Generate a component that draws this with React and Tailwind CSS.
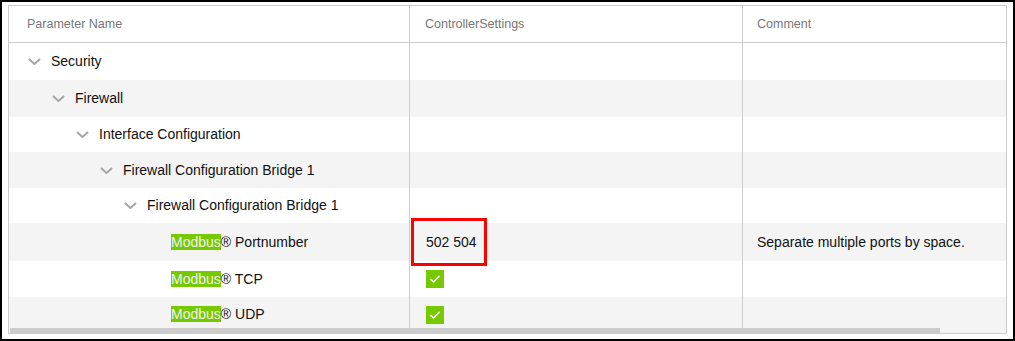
const rows = [
	{ label: 'Security', level: 0, h: 'h-[37px]' },
	{ label: 'Firewall', level: 1, h: 'h-[37px]' },
	{ label: 'Interface Configuration', level: 2, h: 'h-[35px]' },
	{ label: 'Firewall Configuration Bridge 1', level: 3, h: 'h-[36px]' },
	{ label: 'Firewall Configuration Bridge 1', level: 4, h: 'h-[35px]' },
	{ label: 'Portnumber', level: 5, leaf: true, h: 'h-[38px]', value: '502 504', comment: 'Separate multiple ports by space.', marked: true },
	{ label: 'TCP', level: 5, leaf: true, h: 'h-[36px]', check: true },
	{ label: 'UDP', level: 5, leaf: true, h: 'h-[35px]', check: true }
];

const indents = ['pl-[19px]', 'pl-[43px]', 'pl-[67px]', 'pl-[91px]', 'pl-[115px]', 'pl-[139px]'];

const Chevron = ({ hidden }) => (
	<span className="w-[23px] shrink-0 flex items-center">
		{!hidden && (
			<svg width="13" height="7" viewBox="0 0 13 7" fill="none">
				<path d="M1 1 L6.5 6 L12 1" stroke="#a6a6a6" strokeWidth="2" />
			</svg>
		)}
	</span>
);

const Check = () => (
	<span className="w-[18px] h-[18px] bg-[#76c800] flex items-center justify-center">
		<svg width="12" height="10" viewBox="0 0 12 10" fill="none">
			<path d="M1.5 5.2 L4.6 8 L10.5 1.8" stroke="#ffffff" strokeWidth="1.6" />
		</svg>
	</span>
);

const App = () => {
	return (
		<div className="w-[1015px] h-[341px] border-2 border-black bg-white pt-[3px] px-[6px] pb-[3px] font-['Liberation_Sans',Arial,sans-serif]">
			<div className="w-[999px] h-[329px] border border-[#cccccc] flex flex-col overflow-hidden">
				<div className="grid grid-cols-[401px_333px_1fr] h-[37px] shrink-0 border-b border-[#cccccc] text-[12.5px] text-[#777777]">
					<div className="border-r border-[#cccccc] pl-[18px] flex items-center">Parameter Name</div>
					<div className="border-r border-[#cccccc] pl-[15px] flex items-center">ControllerSettings</div>
					<div className="pl-[14px] flex items-center">Comment</div>
				</div>
				<div className="flex-1 min-h-0 overflow-hidden flex flex-col text-[14px] text-[#111111]">
					<div className="flex-1 min-h-0 overflow-hidden">
						{rows.map((r, i) => (
							<div
								key={i}
								className={`grid grid-cols-[401px_333px_1fr] ${r.h} ${i % 2 ? 'bg-[#f4f4f4]' : 'bg-white'}`}
							>
								<div className={`border-r border-[#cccccc] flex items-center ${indents[r.level]}`}>
									<Chevron hidden={r.leaf} />
									{r.leaf ? (
										<span>
											<span className="bg-[#76c800] text-[#f2f2f2]">Modbus</span>® {r.label}
										</span>
									) : (
										<span>{r.label}</span>
									)}
								</div>
								<div className="relative border-r border-[#cccccc] pl-[16px] flex items-center">
									{r.value && <span>{r.value}</span>}
									{r.check && <Check />}
									{r.marked && (
										<div className="absolute left-[1px] top-[-5px] w-[76px] h-[48px] border-[3px] border-[#ff0000]" />
									)}
								</div>
								<div className="pl-[14px] flex items-center">{r.comment}</div>
							</div>
						))}
					</div>
					<div className="h-[5px] shrink-0 pl-[1px] bg-[#f4f4f4]">
						<div className="w-[930px] h-full bg-[#cccccc]" />
					</div>
				</div>
			</div>
		</div>
	);
};

export default App;
